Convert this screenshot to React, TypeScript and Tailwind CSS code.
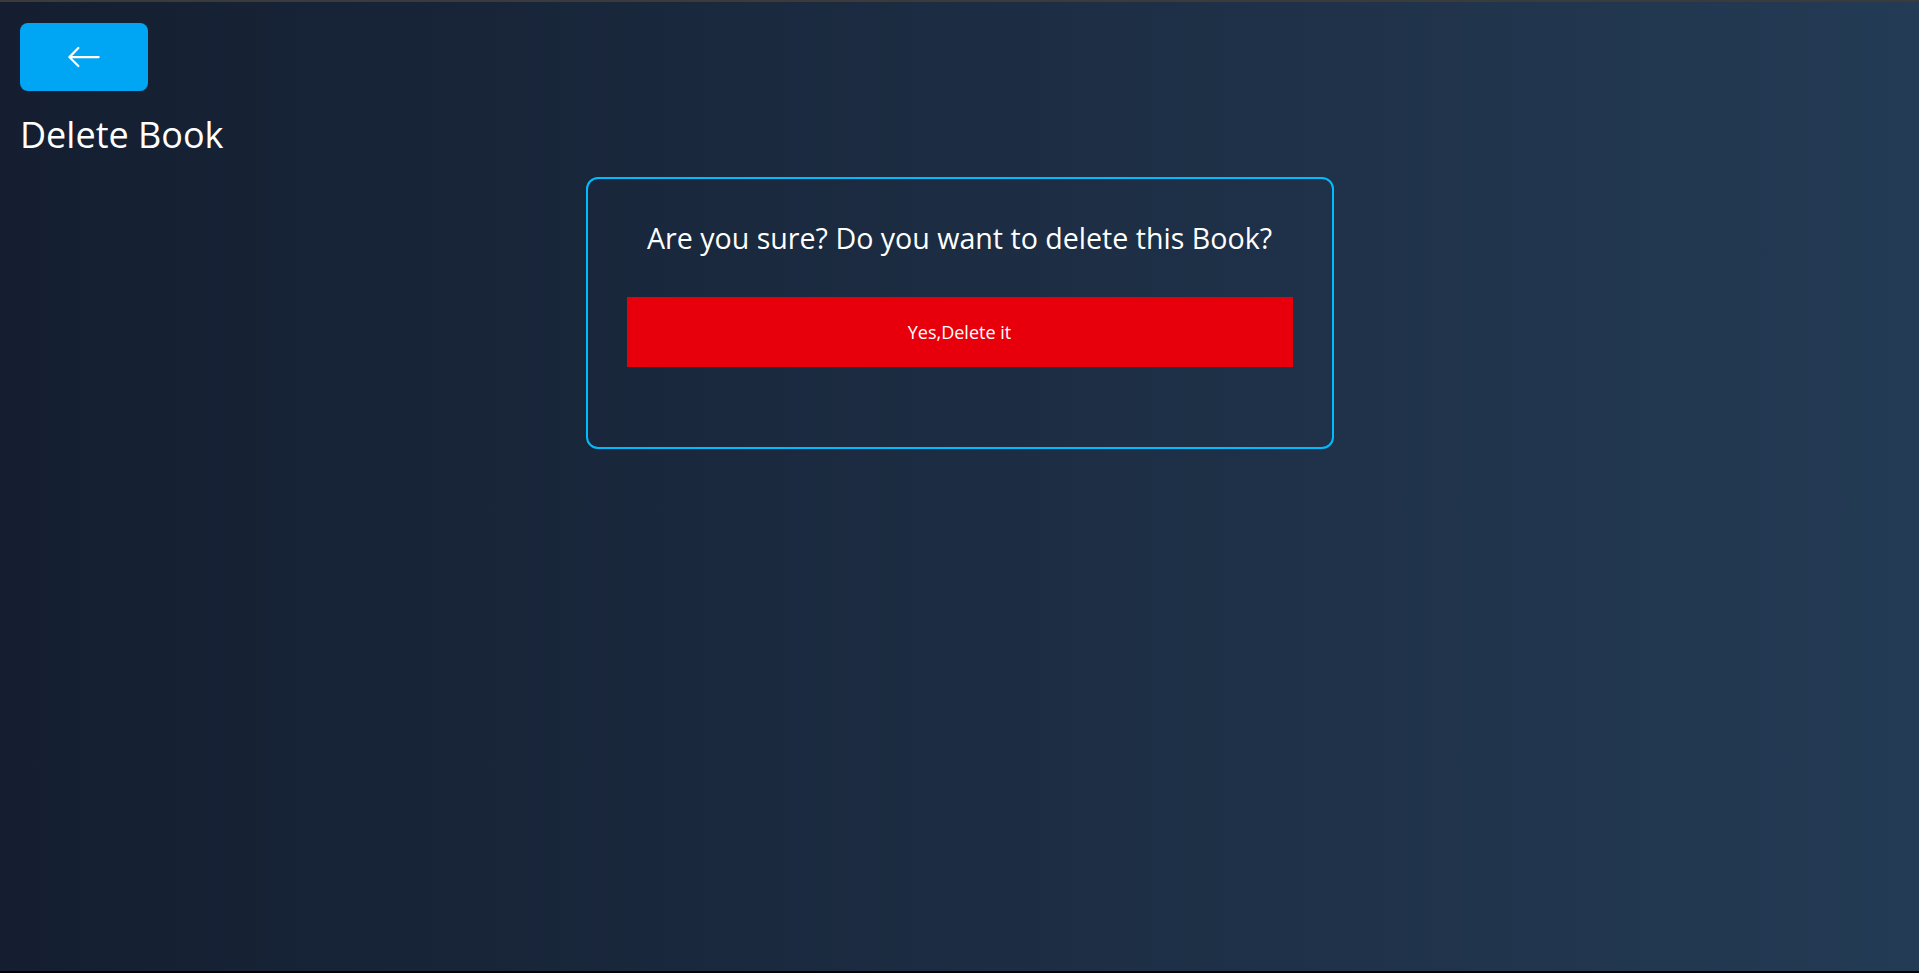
import { BsArrowLeft } from "react-icons/bs";

const DeleteBook = () => {
    return (
        <div
            className="h-screen border-t-2 border-b-2 border-t-[#3b3b3b] border-b-black bg-gradient-to-r from-[#141e30] to-[#243b55] px-5 pt-[21px] text-white"
            style={{ fontFamily: '"Open Sans", "Noto Sans", sans-serif' }}
        >
            <button className="flex h-[68px] w-[128px] items-center justify-center rounded-lg bg-sky-500 text-white">
                <BsArrowLeft className="text-4xl" />
            </button>
            <h1 className="mt-[24px] text-4xl">Delete Book</h1>

            <div className="mx-auto mt-[22px] flex w-[748px] flex-col rounded-xl border-2 border-sky-400 px-[39px] pt-[41px] pb-[80px]">
                <h3 className="mb-[41px] text-center text-[28.6px] leading-9">
                    Are you sure? Do you want to delete this Book?
                </h3>
                <button className="h-[70px] w-full bg-red-600 text-lg text-white">
                    Yes,Delete it
                </button>
            </div>
        </div>
    );
};

export default DeleteBook;
